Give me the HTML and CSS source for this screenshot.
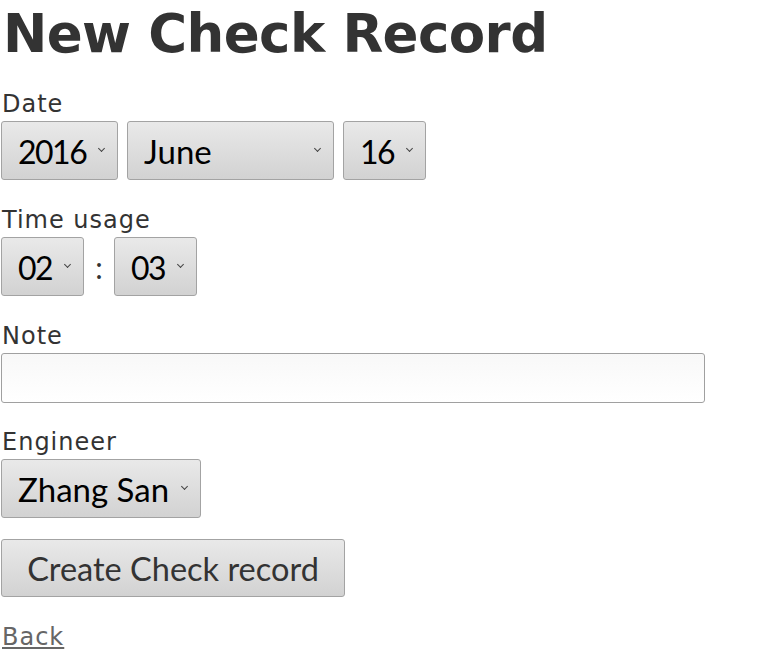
FILE: index.html
```html
<!DOCTYPE html>
<html>
<head>
<meta charset="utf-8">
<title>New Check Record</title>
<link rel="stylesheet" href="styles.css">
</head>
<body>
<h1 class="title">New Check Record</h1>
<form class="form">
  <div class="field">
    <label class="label">Date</label>
    <div class="row">
      <span class="sel-wrap"><select class="sel sel-num sel-year"><option>2016</option></select></span>
      <span class="sel-wrap"><select class="sel sel-month"><option>June</option><option>September</option></select></span>
      <span class="sel-wrap"><select class="sel sel-num sel-day"><option>16</option></select></span>
    </div>
  </div>
  <div class="field">
    <label class="label">Time usage</label>
    <div class="row">
      <span class="sel-wrap"><select class="sel sel-num sel-short"><option>02</option></select></span>
      <span class="colon">:</span>
      <span class="sel-wrap"><select class="sel sel-num sel-short"><option>03</option></select></span>
    </div>
  </div>
  <div class="field field-note">
    <label class="label">Note</label>
    <input class="text-input" type="text">
  </div>
  <div class="field">
    <label class="label">Engineer</label>
    <div class="row">
      <span class="sel-wrap"><select class="sel sel-eng"><option>Zhang San</option></select></span>
    </div>
  </div>
  <div class="actions">
    <button type="button" class="btn">Create Check record</button>
  </div>
</form>
<a class="back" href="#">Back</a>
</body>
</html>
```

FILE: styles.css
```css
html, body {
  margin: 0;
  padding: 0;
  background: #fff;
}
body {
  padding: 0 1px;
  font-family: "DejaVu Sans", sans-serif;
  font-size: 24px;
  color: #333;
}
.title {
  margin: 2px 0 0 2px;
  font-size: 53px;
  letter-spacing: -0.6px;
  font-weight: bold;
  line-height: 63px;
  color: #333;
}
.form {
  margin-top: 25px;
}
.field {
  margin-bottom: 26px;
}
.field-note {
  margin-bottom: 25px;
}
.label {
  display: block;
  line-height: 28px;
  margin: 0 0 3px 1px;
  letter-spacing: 1px;
}
.row {
  display: flex;
  align-items: center;
  gap: 9px;
}
.sel-wrap {
  position: relative;
  display: block;
}
.sel-wrap::after {
  content: "";
  position: absolute;
  right: 14px;
  top: 25px;
  width: 4px;
  height: 4px;
  border-right: 1.4px solid #444;
  border-bottom: 1.4px solid #444;
  transform: rotate(45deg);
  pointer-events: none;
}
.sel {
  -webkit-appearance: none;
  appearance: none;
  box-sizing: border-box;
  height: 59px;
  margin: 0;
  padding: 1px 0 0 16px;
  border: 1px solid #a3a3a3;
  border-radius: 3px;
  background: linear-gradient(#e9e9e9, #d2d2d2);
  font-family: Lato, "Open Sans", sans-serif;
  font-size: 33px;
  color: #000;
}
.sel-num {
  font-size: 32px;
  letter-spacing: -1.5px;
}
.sel-year { width: 117px; }
.sel-month { width: 207px; }
.sel-day { width: 83px; }
.sel-short { width: 83px; }
.sel-eng { width: 200px; }
.colon {
  width: 12px;
  text-align: center;
  font-family: Lato, sans-serif;
  font-size: 30px;
  color: #333;
}
.text-input {
  display: block;
  box-sizing: border-box;
  width: 704px;
  height: 50px;
  margin: 0;
  border: 1px solid #a0a0a0;
  border-radius: 3px;
  background: linear-gradient(#f8f8f8, #fff);
  font-size: 24px;
}
.actions {
  margin-top: -5px;
}
.btn {
  box-sizing: border-box;
  height: 58px;
  width: 344px;
  margin: 0;
  padding: 0;
  border: 1px solid #a3a3a3;
  border-radius: 3px;
  background: linear-gradient(#e9e9e9, #d2d2d2);
  font-family: Lato, "Open Sans", sans-serif;
  font-size: 32.5px;
  color: #333;
}
.back {
  display: inline-block;
  margin: 26px 0 0 1px;
  line-height: 28px;
  letter-spacing: 1px;
  color: #666;
  text-decoration: underline;
}
```
